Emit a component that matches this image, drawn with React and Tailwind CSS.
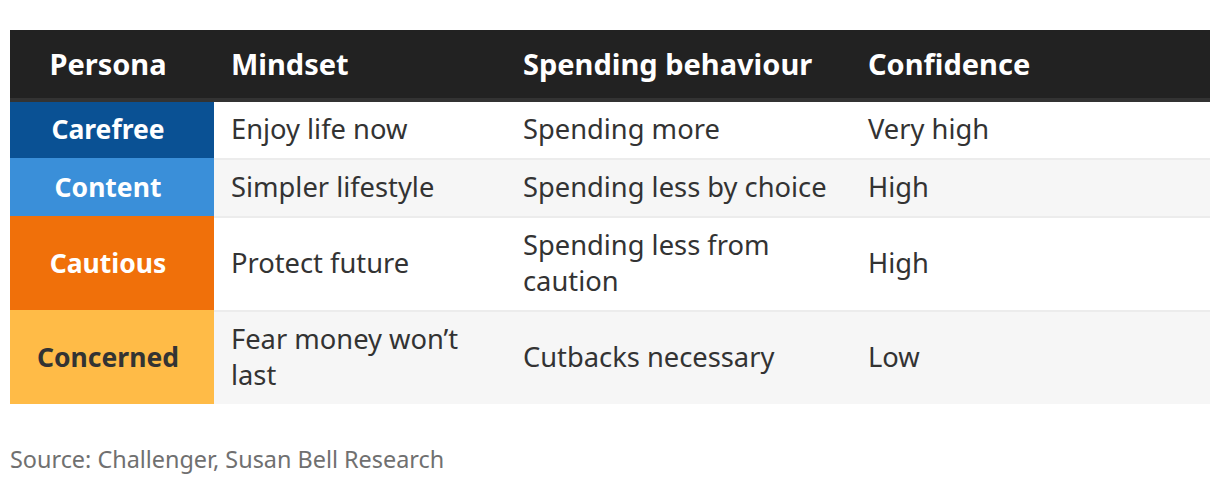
import React from "react";

const rows = [
  { p: "Carefree", bg: "bg-[#0a5194]", fg: "text-white", rowBg: "bg-white", m: "Enjoy life now", s: "Spending more", c: "Very high" },
  { p: "Content", bg: "bg-[#3a8fd9]", fg: "text-white", rowBg: "bg-[#f6f6f6]", m: "Simpler lifestyle", s: "Spending less by choice", c: "High" },
  { p: "Cautious", bg: "bg-[#f0700a]", fg: "text-white", rowBg: "bg-white", m: "Protect future", s: "Spending less from caution", c: "High" },
  { p: "Concerned", bg: "bg-[#ffbb47]", fg: "text-[#333333]", rowBg: "bg-[#f6f6f6]", m: "Fear money won\u2019t last", s: "Cutbacks necessary", c: "Low" },
];

export default function App() {
  return (
    <div className="w-[1220px] h-[486px] bg-white pt-[30px] px-[10px]" style={{ fontFamily: '"Noto Sans", "Open Sans", sans-serif' }}>
      <div className="grid grid-cols-[204px_292px_345px_1fr]">
        <div className="h-[72px] bg-[#222222] border-b-4 border-[#333333] flex items-center justify-center pr-2 text-white font-bold text-[29px]">Persona</div>
        <div className="h-[72px] bg-[#222222] border-b-4 border-[#333333] flex items-center pl-[17px] text-white font-bold text-[29px]">Mindset</div>
        <div className="h-[72px] bg-[#222222] border-b-4 border-[#333333] flex items-center pl-[17px] text-white font-bold text-[29px] whitespace-nowrap">Spending behaviour</div>
        <div className="h-[72px] bg-[#222222] border-b-4 border-[#333333] flex items-center pl-[17px] text-white font-bold text-[29px]">Confidence</div>
        {rows.map((r, i) => (
          <React.Fragment key={r.p}>
            <div className={`${r.bg} ${r.fg} ${i > 0 ? "pt-[1px]" : ""} pb-[2px] flex items-center justify-center pr-2 font-bold text-[26.5px] leading-[36px]`}>{r.p}</div>
            {[r.m, r.s, r.c].map((t, j) => (
              <div key={j} className={`${r.rowBg} ${i > 0 ? "border-t-2 border-[#ececec] min-h-[58px]" : "min-h-[56px]"} flex items-center pl-[17px] pr-[6px] pt-[9px] pb-[11px] text-[#333333] text-[27.3px] leading-[36px]`}>{t}</div>
            ))}
          </React.Fragment>
        ))}
      </div>
      <div className="mt-[40px] text-[#707070] text-[23.4px] leading-[30px]">Source: Challenger, Susan Bell Research</div>
    </div>
  );
}
